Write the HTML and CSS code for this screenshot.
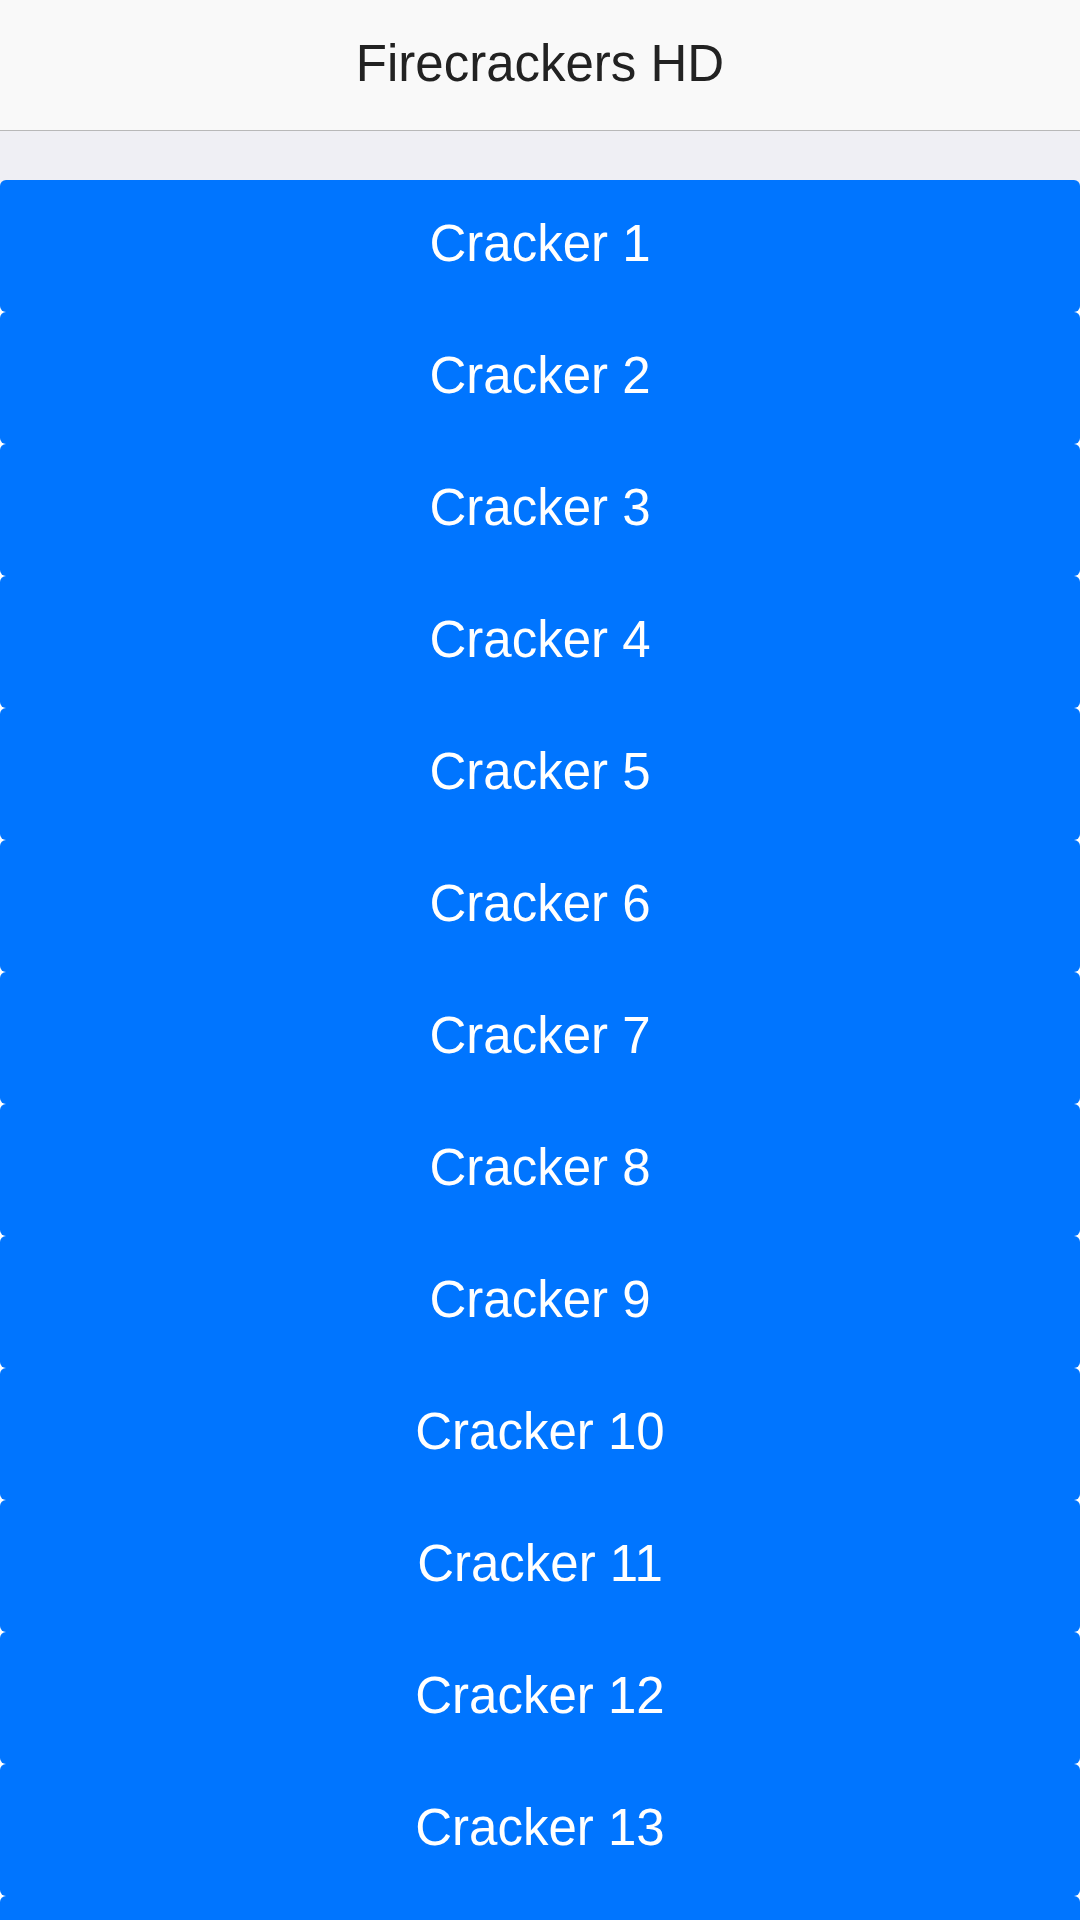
FILE: index.html
```html
<!DOCTYPE html>
<html>
<head>
<meta charset="utf-8">
<link rel="stylesheet" href="styles.css">
</head>
<body>
<header class="bar"><h1 class="title">Firecrackers HD</h1></header>
<main class="content">
  <div class="list">
    <button class="crk">Cracker 1</button>
    <button class="crk">Cracker 2</button>
    <button class="crk">Cracker 3</button>
    <button class="crk">Cracker 4</button>
    <button class="crk">Cracker 5</button>
    <button class="crk">Cracker 6</button>
    <button class="crk">Cracker 7</button>
    <button class="crk">Cracker 8</button>
    <button class="crk">Cracker 9</button>
    <button class="crk">Cracker 10</button>
    <button class="crk">Cracker 11</button>
    <button class="crk">Cracker 12</button>
    <button class="crk">Cracker 13</button>
    <button class="crk">Cracker 14</button>
  </div>
</main>
</body>
</html>
```
FILE: styles.css
```css
html, body {
  margin: 0;
  padding: 0;
  height: 100%;
  overflow: hidden;
}
body {
  background: #efeff4;
  font-family: "Liberation Sans", Arial, sans-serif;
}
.bar {
  height: 131px;
  box-sizing: border-box;
  background: #f9f9f9;
  border-bottom: 1px solid #b8b8b8;
  display: flex;
  align-items: center;
  justify-content: center;
  padding-bottom: 4px;
}
.title {
  margin: 0;
  font-size: 51px;
  font-weight: normal;
  color: #222222;
  line-height: 1;
}
.content {
  padding-top: 49px;
}
.list {
  display: flex;
  flex-direction: column;
  background: linear-gradient(#efeff4 12px, #ffffff 12px);
}
.crk {
  display: flex;
  align-items: center;
  justify-content: center;
  height: 132px;
  width: 100%;
  box-sizing: border-box;
  padding: 0 0 5px 0;
  margin: 0;
  border: none;
  border-radius: 6px;
  background: #0075ff;
  color: #ffffff;
  font-family: "Liberation Sans", Arial, sans-serif;
  font-size: 51px;
  line-height: 1;
}
```
